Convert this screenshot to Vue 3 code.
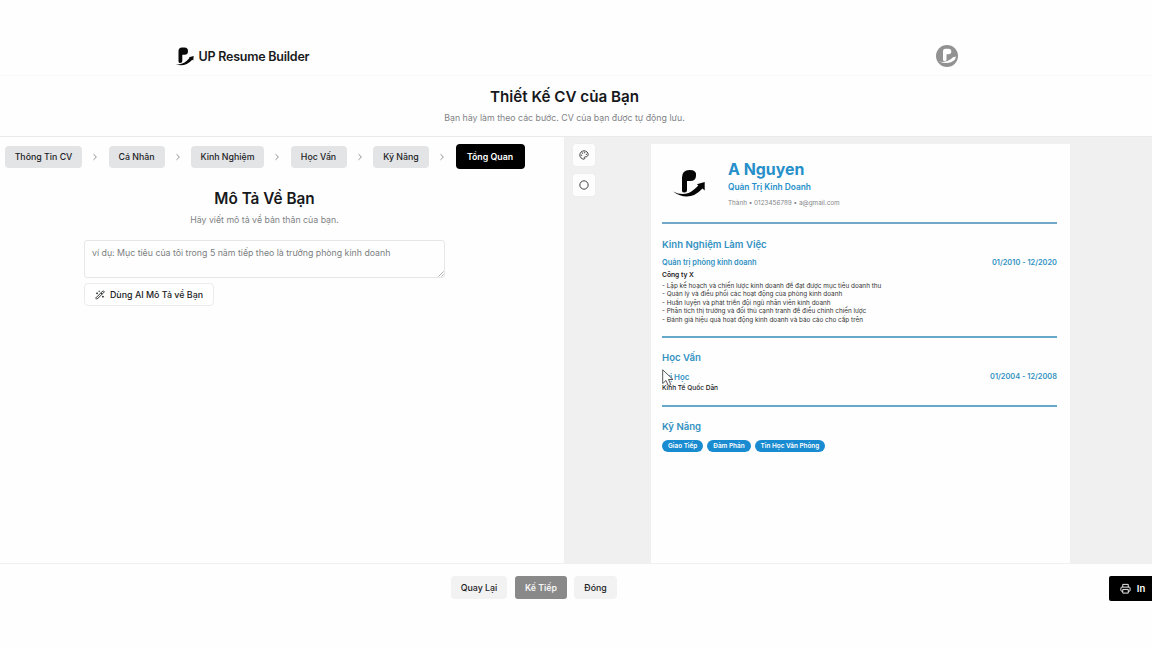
<script setup>
const steps = [
  { label: 'Thông Tin CV', width: 77 },
  { label: 'Cá Nhân', width: 56 },
  { label: 'Kinh Nghiệm', width: 73 },
  { label: 'Học Vấn', width: 56 },
  { label: 'Kỹ Năng', width: 56 },
  { label: 'Tổng Quan', width: 69, active: true },
]
const duties = [
  'Lập kế hoạch và chiến lược kinh doanh để đạt được mục tiêu doanh thu',
  'Quản lý và điều phối các hoạt động của phòng kinh doanh',
  'Huấn luyện và phát triển đội ngũ nhân viên kinh doanh',
  'Phân tích thị trường và đối thủ cạnh tranh để điều chỉnh chiến lược',
  'Đánh giá hiệu quả hoạt động kinh doanh và báo cáo cho cấp trên',
]
const skills = ['Giao Tiếp', 'Đàm Phán', 'Tin Học Văn Phòng']
</script>

<template>
  <div class="page">
    <header class="topbar">
      <div class="brand">
        <svg class="brand-logo" viewBox="0 0 19 19">
          <path d="M3.500 14.500V4Q3.500.5 7 .5H9.500Q13 .5 13 4.200Q13 7.700 9.500 7.700H7.300V14Q7.300 16 5.300 16Q3.500 16 3.500 14.500Z" />
          <path d="M.3 17.300Q7 18 11.500 14L14.500 11L14 10.200L18.700 9L18.200 13.500L17.300 12.700Q10 20.500.3 17.300Z" />
        </svg>
        <span>UP Resume Builder</span>
      </div>
      <svg class="avatar" viewBox="0 0 22 22">
        <circle cx="11" cy="11" r="11" fill="#929292" />
        <path d="M7 15V6Q7 3.800 9.500 3.800H12.500Q15.300 3.800 15.300 6.500T12.500 9.200H10.500V15Q10.500 16 8.700 16Q7 16 7 15Z" fill="#fff" />
        <path d="M3 16.500Q10 18 15 14L17 12.200L20 11.500L19 14.500Q13 20.500 3 16.500Z" fill="#fff" />
      </svg>
    </header>

    <section class="intro">
      <h1>Thiết Kế CV của Bạn</h1>
      <p>Bạn hãy làm theo các bước. CV của bạn được tự động lưu.</p>
    </section>

    <main class="workspace">
      <section class="editor">
        <nav class="steps">
          <template v-for="(step, i) in steps" :key="step.label">
            <svg v-if="i" class="chevron" viewBox="0 0 6 8"><path d="M1.500 1.200L4.400 4L1.500 6.800" /></svg>
            <button class="step" :class="{ active: step.active }" :style="{ width: step.width + 'px' }">{{ step.label }}</button>
          </template>
        </nav>
        <div class="form">
          <h2>Mô Tả Về Bạn</h2>
          <p class="hint">Hãy viết mô tả về bản thân của bạn.</p>
          <div class="textarea">
            <span>ví dụ: Mục tiêu của tôi trong 5 năm tiếp theo là trưởng phòng kinh doanh</span>
            <svg class="grip" viewBox="0 0 7 7"><path d="M.5 6.500L6.500.5M4 6.500L6.500 4" /></svg>
          </div>
          <button class="ai">
            <svg viewBox="0 0 24 24">
              <path d="m21.640 3.640-1.280-1.280a1.210 1.210 0 0 0-1.720 0L2.360 18.640a1.210 1.210 0 0 0 0 1.720l1.280 1.280a1.200 1.200 0 0 0 1.720 0L21.640 5.360a1.200 1.200 0 0 0 0-1.720M14 7l3 3M5 6v4M19 14v4M10 2v2M7 8H3M21 16h-4M11 3H9" />
            </svg>
            <span>Dùng AI Mô Tả về Bạn</span>
          </button>
        </div>
      </section>

      <section class="preview">
        <div class="tools">
          <button class="tool">
            <svg viewBox="0 0 24 24">
              <path d="M12 2C6.500 2 2 6.500 2 12s4.500 10 10 10c.926 0 1.648-.746 1.648-1.688 0-.437-.18-.835-.437-1.125-.29-.289-.438-.652-.438-1.125a1.640 1.640 0 0 1 1.668-1.668h1.996c3.051 0 5.555-2.503 5.555-5.554C21.965 6.012 17.461 2 12 2z" />
              <circle cx="13.500" cy="6.500" r=".7" /><circle cx="17.500" cy="10.500" r=".7" /><circle cx="8.500" cy="7.500" r=".7" /><circle cx="6.500" cy="12.500" r=".7" />
            </svg>
          </button>
          <button class="tool"><svg viewBox="0 0 24 24"><circle cx="12" cy="12" r="10" /></svg></button>
        </div>

        <article class="cv">
          <div class="person">
            <svg class="cv-logo" viewBox="0 0 32 27">
              <path d="M9 21V7.500Q9 0 16.500 0T23 5.700Q23 11 17 11H14V20Q14 22.500 11.500 22.500Q9 22.500 9 21Z" />
              <path d="M0 21.500Q12 27.500 21 19.500Q24 17.500 25.300 15.300L23.800 14.300L31.700 12V20.500L29.500 18.500Q16 33 0 21.500Z" />
            </svg>
            <div>
              <div class="name">A Nguyen</div>
              <div class="job">Quản Trị Kinh Doanh</div>
              <div class="contact">Thành • 0123456789 • a@gmail.com</div>
            </div>
          </div>
          <section class="block work">
            <h3>Kinh Nghiệm Làm Việc</h3>
            <div class="entry"><span class="role">Quản trị phòng kinh doanh</span><span class="date">01/2010 - 12/2020</span></div>
            <div class="company">Công ty X</div>
            <ul><li v-for="duty in duties" :key="duty">- {{ duty }}</li></ul>
          </section>
          <section class="block study">
            <h3>Học Vấn</h3>
            <div class="entry"><span class="role">Trị Học</span><span class="date">01/2004 - 12/2008</span></div>
            <div class="school">Kinh Tế Quốc Dân</div>
            <svg class="cursor" viewBox="0 0 12 18"><path d="M.7.8V14.500L4 11.500L6.300 16.800L8.800 15.700L6.500 10.500H11Z" /></svg>
          </section>
          <section class="block talent">
            <h3>Kỹ Năng</h3>
            <div class="skills"><span v-for="skill in skills" :key="skill">{{ skill }}</span></div>
          </section>
        </article>
      </section>
    </main>

    <footer class="actions">
      <button class="back">Quay Lại</button>
      <button class="next">Kế Tiếp</button>
      <button class="close">Đóng</button>
      <button class="print">
        <svg viewBox="0 0 24 24"><path d="M6 9V3h12v6M6 18H4a2 2 0 0 1-2-2v-5a2 2 0 0 1 2-2h16a2 2 0 0 1 2 2v5a2 2 0 0 1-2 2h-2M6 14h12v8H6z" /></svg>
        <span>In</span>
      </button>
    </footer>
  </div>
</template>

<style>
body { margin: 0; background: #fefefe; overflow: hidden; }
</style>

<style scoped>
* { box-sizing: border-box; }
h1, h2, h3, p, ul { margin: 0; padding: 0; }
li { list-style: none; }
button { border: 0; padding: 0; font: inherit; color: inherit; display: flex; align-items: center; justify-content: center; white-space: nowrap; }
svg { display: block; flex: none; overflow: visible; }
.page { width: 1152px; height: 648px; display: flex; flex-direction: column; font-family: Inter, "Liberation Sans", sans-serif; font-size: 8.800px; color: #202124; background: #fefefe; }
.topbar { height: 76px; padding: 37px 194.500px 0 175px; display: flex; justify-content: space-between; align-items: center; border-bottom: 1px solid #f7f7f7; }
.brand { display: flex; align-items: center; gap: 4.500px; font-size: 12.500px; font-weight: 600; letter-spacing: -.23px; color: #18191b; }
.brand-logo { width: 19px; height: 19px; fill: #090909; }
.avatar { width: 22px; height: 22px; }
.intro { height: 60px; display: flex; flex-direction: column; align-items: center; padding: 11px 23px 0 0; white-space: nowrap; }
h1 { font-size: 15.200px; line-height: 20px; font-weight: 600; color: #17181b; }
.intro p { margin-top: 5px; line-height: 13px; font-size: 8.770px; color: #808285; }
.workspace { height: 428px; display: flex; border-top: 1px solid #eaeaea; border-bottom: 1px solid #f0f0f0; }
.editor { width: 565px; border-right: 1px solid #eee; }
.steps { height: 39px; padding-left: 5px; display: flex; align-items: center; }
.step { height: 22px; border-radius: 4px; background: #e3e4e6; font-weight: 500; }
.step.active { height: 25px; background: #000; color: #fff; font-weight: 600; }
.chevron { width: 6px; height: 8px; margin: 0 10.250px; fill: none; stroke: #8f9194; stroke-width: 1; }
.form { width: 361px; margin: 12px 0 0 84px; }
h2 { text-align: center; font-size: 15.300px; line-height: 22px; font-weight: 600; color: #17181b; }
.hint { margin-top: 4px; text-align: center; line-height: 13px; font-size: 8.770px; color: #808285; }
.textarea { position: relative; height: 38px; margin-top: 13px; padding: 6px 7px; border: 1px solid #e6e7e9; border-radius: 3px; font-size: 8.770px; line-height: 12px; color: #7c7e81; white-space: nowrap; }
.grip { position: absolute; right: 0; bottom: 0; width: 6px; height: 6px; stroke: #888; stroke-width: .8; }
.ai { width: 130px; height: 23px; margin-top: 5px; gap: 5px; border: 1px solid #ebebed; border-radius: 4px; background: #fff; font-weight: 500; }
.ai span { font-size: 8.900px; }
.ai svg { width: 10px; height: 10px; fill: none; stroke: #26272a; stroke-width: 2.300; }
.preview { flex: 1; display: flex; background: #f0f0f0; padding: 7px 0 0 8px; }
.tools { width: 78px; display: flex; flex-direction: column; gap: 8px; }
.tool { width: 22px; height: 22px; border-radius: 3px; background: #fdfdfd; box-shadow: 0 0 1px #ddd; }
.tool svg { width: 10px; height: 10px; fill: none; stroke: #38393b; stroke-width: 2.300; }
.cv { width: 419px; height: 419px; background: #fefefe; padding: 15px 13px 0 11px; }
.person { display: flex; height: 65px; border-bottom: 2px solid #72a7c7; color: #268fca; }
.cv-logo { width: 32px; height: 27px; margin: 11px 23px 0 11px; fill: #060606; }
.name { font-size: 15.900px; line-height: 22px; font-weight: 700; }
.job { line-height: 12px; font-size: 8.350px; font-weight: 600; }
.contact { margin-top: 6px; font-size: 6.370px; line-height: 9px; color: #85878a; }
.block { position: relative; border-bottom: 2px solid #67a9cb; white-space: nowrap; }
h3 { font-size: 9.600px; line-height: 14px; font-weight: 600; color: #3391c2; }
.work { height: 114px; padding-top: 14px; }
.entry { display: flex; justify-content: space-between; height: 10px; margin-top: 6px; line-height: 10px; font-size: 7.420px; font-weight: 600; color: #3292c3; }
.company { margin-top: 3px; line-height: 9px; font-size: 6.700px; font-weight: 600; }
ul { margin-top: 1.500px; font-size: 6.380px; line-height: 8.500px; color: #333; }
.study { height: 69px; padding-top: 13px; }
.study .entry { margin-top: 7px; }
.school { margin-top: 2px; line-height: 9px; font-size: 6.550px; font-weight: 500; }
.cursor { position: absolute; left: 0; top: 31px; width: 12px; height: 18px; fill: #fff; stroke: #444; stroke-width: .9; }
.study .role { font-size: 7.900px; }
.talent { padding-top: 13px; border: 0; }
.skills { display: flex; gap: 4px; margin-top: 6px; }
.skills span { height: 12px; line-height: 12px; padding: 0 6px; border-radius: 6px; background: #198bd0; color: #fff; font-size: 6.400px; font-weight: 600; }
.actions { height: 50px; display: flex; align-items: flex-start; padding: 12px 0 0 451px; font-weight: 500; }
.back { width: 56px; height: 23px; border-radius: 4px; background: #f2f2f2; }
.next { width: 52px; height: 23px; margin: 0 7px 0 8px; border-radius: 3px; background: #898989; color: #f5f5f5; font-weight: 600; }
.close { width: 43px; height: 23px; border-radius: 4px; background: #f2f2f2; }
.print { width: 43px; height: 25px; margin-left: auto; gap: 6px; padding-left: 4px; border-radius: 2px 0 0 2px; background: #000; color: #fff; font-size: 9.500px; font-weight: 600; }
.print svg { width: 11px; height: 11px; fill: none; stroke: #fff; stroke-width: 2; }
</style>
